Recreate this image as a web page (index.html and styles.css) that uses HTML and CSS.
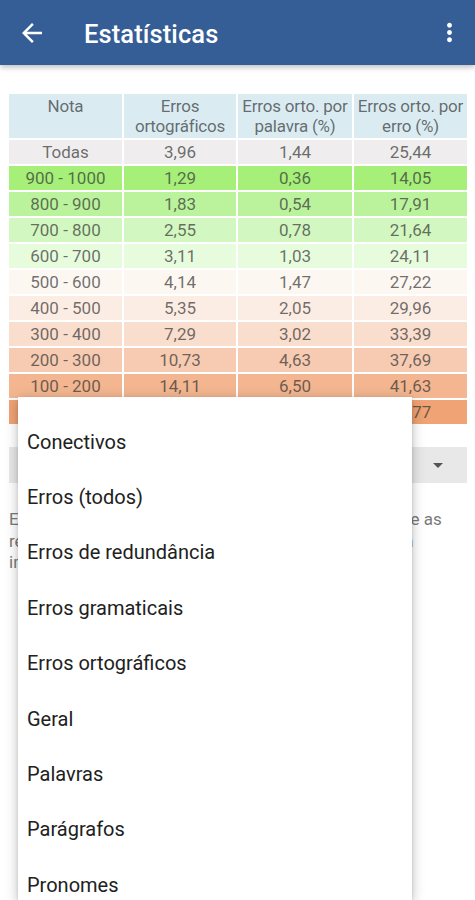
FILE: index.html
```html
<!DOCTYPE html>
<html lang="pt">
<head>
<meta charset="utf-8">
<title>Estatísticas</title>
<link rel="stylesheet" href="styles.css">
</head>
<body>
<header class="appbar">
  <svg class="icon back" viewBox="0 0 24 24" width="30" height="30"><path d="M20 11H7.83l5.59-5.59L12 4l-8 8 8 8 1.41-1.41L7.83 13H20v-2z" fill="#fff"/></svg>
  <h1 class="title">Estatísticas</h1>
  <svg class="icon more" viewBox="0 0 24 24" width="29" height="29"><path d="M12 8c1.1 0 2-.9 2-2s-.9-2-2-2-2 .9-2 2 .9 2 2 2zm0 2c-1.1 0-2 .9-2 2s.9 2 2 2 2-.9 2-2-.9-2-2-2zm0 6c-1.1 0-2 .9-2 2s.9 2 2 2 2-.9 2-2-.9-2-2-2z" fill="#fff"/></svg>
</header>
<main class="content">
  <div class="table">
    <div class="cell head">Nota</div>
    <div class="cell head">Erros<br>ortográficos</div>
    <div class="cell head">Erros orto. por<br>palavra (%)</div>
    <div class="cell head">Erros orto. por<br>erro (%)</div>

    <div class="cell r-all">Todas</div><div class="cell r-all">3,96</div><div class="cell r-all">1,44</div><div class="cell r-all">25,44</div>
    <div class="cell r900">900 - 1000</div><div class="cell r900">1,29</div><div class="cell r900">0,36</div><div class="cell r900">14,05</div>
    <div class="cell r800">800 - 900</div><div class="cell r800">1,83</div><div class="cell r800">0,54</div><div class="cell r800">17,91</div>
    <div class="cell r700">700 - 800</div><div class="cell r700">2,55</div><div class="cell r700">0,78</div><div class="cell r700">21,64</div>
    <div class="cell r600">600 - 700</div><div class="cell r600">3,11</div><div class="cell r600">1,03</div><div class="cell r600">24,11</div>
    <div class="cell r500">500 - 600</div><div class="cell r500">4,14</div><div class="cell r500">1,47</div><div class="cell r500">27,22</div>
    <div class="cell r400">400 - 500</div><div class="cell r400">5,35</div><div class="cell r400">2,05</div><div class="cell r400">29,96</div>
    <div class="cell r300">300 - 400</div><div class="cell r300">7,29</div><div class="cell r300">3,02</div><div class="cell r300">33,39</div>
    <div class="cell r200">200 - 300</div><div class="cell r200">10,73</div><div class="cell r200">4,63</div><div class="cell r200">37,69</div>
    <div class="cell r100">100 - 200</div><div class="cell r100">14,11</div><div class="cell r100">6,50</div><div class="cell r100">41,63</div>
    <div class="cell r0">0 - 100</div><div class="cell r0">19,52</div><div class="cell r0">9,18</div><div class="cell r0">45,77</div>
  </div>

  <div class="spinner"><span class="caret"></span></div>

  <p class="note">Estatísticas geradas a partir das redações corrigidas e as<br>redações recebidas pelos usuários do aplicativo até a<br>imagem mais recente dos dados.</p>
</main>

<div class="menu">
  <div class="item">Conectivos</div>
  <div class="item">Erros (todos)</div>
  <div class="item">Erros de redundância</div>
  <div class="item">Erros gramaticais</div>
  <div class="item">Erros ortográficos</div>
  <div class="item">Geral</div>
  <div class="item">Palavras</div>
  <div class="item">Parágrafos</div>
  <div class="item">Pronomes</div>
</div>
</body>
</html>
```
FILE: styles.css
```css
html, body {
  margin: 0;
  padding: 0;
  background: #ffffff;
  font-family: Roboto, "Noto Sans", "Liberation Sans", sans-serif;
  width: 475px;
  height: 900px;
  overflow: hidden;
}

.appbar {
  position: relative;
  z-index: 2;
  height: 65px;
  background: #365e96;
  display: flex;
  align-items: center;
  box-shadow: 0 2px 6px rgba(0, 0, 0, 0.28);
}

.icon {
  display: block;
  flex: none;
}

.back {
  margin-left: 17px;
}

.title {
  margin: 2px 0 0 37px;
  flex: 1;
  color: #ffffff;
  font-size: 25.5px;
  font-weight: 500;
  letter-spacing: 0.1px;
}

.more {
  margin-right: 11px;
}

.content {
  padding: 29px 8px 0 9px;
}

.table {
  display: grid;
  grid-template-columns: 113px 112px 114px 113px;
  grid-template-rows: 44px;
  grid-auto-rows: 24px;
  gap: 2px;
}

.cell {
  display: flex;
  align-items: center;
  justify-content: center;
  text-align: center;
  font-size: 17px;
  color: rgba(50, 50, 50, 0.7);
  white-space: nowrap;
  line-height: 20px;
}

.head {
  background: #daecf2;
  line-height: 20px;
  align-items: flex-start;
  padding-top: 2px;
  box-sizing: border-box;
  letter-spacing: -0.2px;
}

.r-all { background: #efeded; }
.r900 { background: #a6ef79; }
.r800 { background: #baf39c; }
.r700 { background: #d2f7c0; }
.r600 { background: #e7fbdd; }
.r500 { background: #fdf7f2; }
.r400 { background: #fcede4; }
.r300 { background: #f9ddcd; }
.r200 { background: #f6cbb1; }
.r100 { background: #f3b690; }
.r0 { background: #f0a374; }

.spinner {
  margin-top: 23px;
  height: 36px;
  background: #e8e8e8;
  display: flex;
  align-items: center;
  justify-content: flex-end;
  padding-right: 24px;
}

.caret {
  width: 0;
  height: 0;
  border-left: 5px solid transparent;
  border-right: 5px solid transparent;
  border-top: 5px solid #555555;
}

.note {
  margin: 26px 0 0 0;
  font-size: 17px;
  line-height: 21.5px;
  color: #7a7a7a;
}

.menu {
  position: absolute;
  left: 18px;
  top: 397px;
  width: 394px;
  height: 503px;
  box-sizing: border-box;
  background: #ffffff;
  padding-top: 17px;
  box-shadow: 0 3px 12px rgba(0, 0, 0, 0.26), 0 1px 3px rgba(0, 0, 0, 0.12);
  z-index: 3;
}

.item {
  height: 55.4px;
  display: flex;
  align-items: center;
  padding-left: 9px;
  font-size: 20px;
  color: #212121;
}
```
